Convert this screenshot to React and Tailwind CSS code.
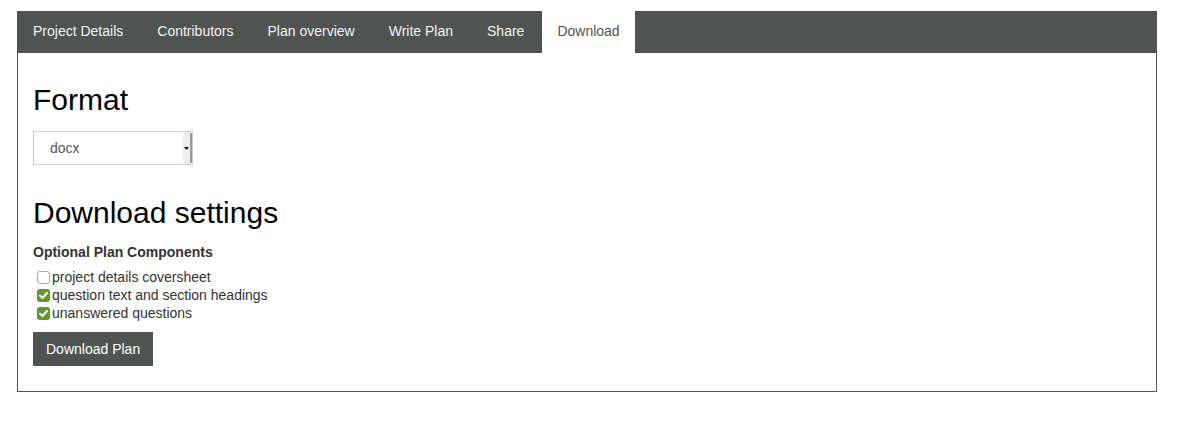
import React from "react";

const tabs = ["Project Details", "Contributors", "Plan overview", "Write Plan", "Share", "Download"];

function Check({ checked }) {
  if (!checked) {
    return <span className="inline-block w-[13px] h-[13px] rounded-[3px] border border-[#a9a9a9] bg-white mr-[2px] ml-[4px] shrink-0" />;
  }
  return (
    <span className="inline-flex items-center justify-center w-[13px] h-[13px] rounded-[3px] bg-[#5e9a2c] mr-[2px] ml-[4px] shrink-0">
      <svg width="11" height="11" viewBox="0 0 11 11">
        <path d="M2 5.6 L4.5 8 L9 3" fill="none" stroke="white" strokeWidth="2" strokeLinecap="round" strokeLinejoin="round" />
      </svg>
    </span>
  );
}

export default function App() {
  const items = [
    ["project details coversheet", false],
    ["question text and section headings", true],
    ["unanswered questions", true],
  ];
  return (
    <div className="bg-white w-[1193px] h-[424px] pt-[11px] pl-[17px]" style={{ fontFamily: '"Liberation Sans", Arial, sans-serif' }}>
      <div className="w-[1140px]">
        <div className="flex h-[42px] bg-[#4f5453]">
          {tabs.map((t) => (
            <div
              key={t}
              className={
                "flex items-center pb-[1px] mr-[2px] text-[14px] " +
                (t === "Download" ? "bg-white text-[#4f5453] px-[15px]" : "text-[#f2f2f2] px-[16px]")
              }
            >
              {t}
            </div>
          ))}
        </div>
        <div className="border-x border-b border-[#555] px-[15px] pt-[30px] pb-[25px] text-[#333]">
          <h2 className="text-[30px] leading-[33px] text-black">Format</h2>
          <div className="mt-[15px] w-[160px] h-[34px] border border-[#ccc] flex items-stretch bg-white">
            <div className="flex-1 flex items-center pl-[16px] text-[14px] text-[#555]">docx</div>
            <div className="w-[9px] my-[1px] bg-[#eeeeee] border-r-2 border-[#9a9a9a] flex items-center justify-center">
              <svg width="5" height="3" viewBox="0 0 5 3"><path d="M0 0 H5 L2.5 3 Z" fill="#111" /></svg>
            </div>
          </div>
          <h2 className="mt-[31px] text-[30px] leading-[33px] text-black">Download settings</h2>
          <div className="mt-[13px] text-[14px] leading-[20px] font-bold text-[#333]">Optional Plan Components</div>
          <div className="mt-[6px]">
            {items.map(([label, c]) => (
              <div key={label} className="flex items-center h-[18px] text-[14px] text-[#333]">
                <Check checked={c} />
                <span>{label}</span>
              </div>
            ))}
          </div>
          <button className="mt-[10px] h-[34px] px-[13px] bg-[#4f5453] text-white text-[14px]">Download Plan</button>
        </div>
      </div>
    </div>
  );
}
